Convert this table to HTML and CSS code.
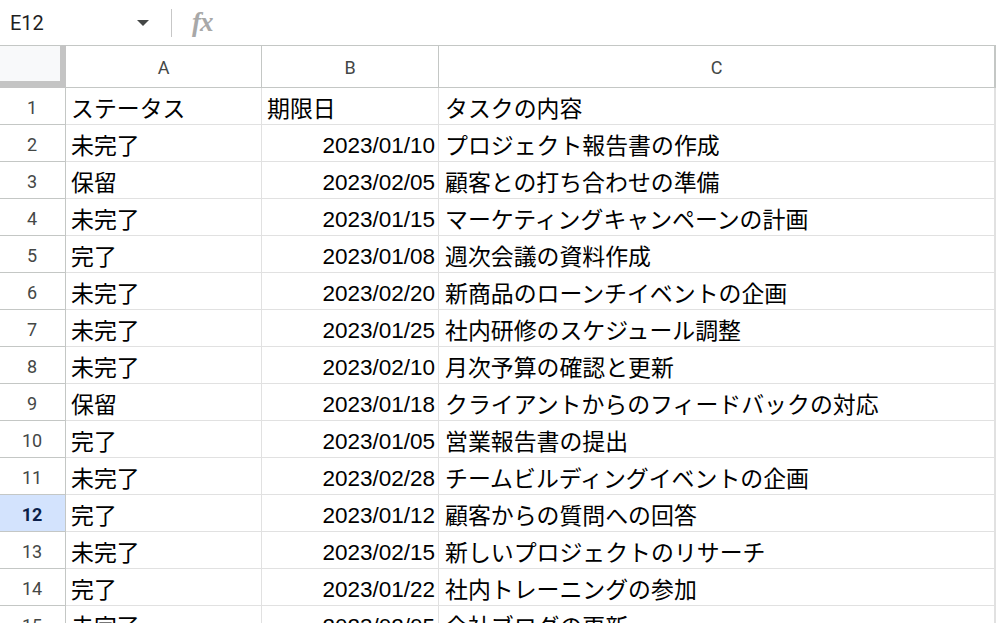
FILE: index.html
```html
<!DOCTYPE html>
<html lang="ja">
<head>
<meta charset="utf-8">
<title>Sheet</title>
<link rel="stylesheet" href="styles.css">
</head>
<body>
<div class="topbar">
  <div class="namebox">E12</div>
  <div class="caret"></div>
  <div class="sep"></div>
  <div class="fx">fx</div>
</div>
<div class="sheet">
  <div class="corner"></div>
  <div class="colhead">A</div>
  <div class="colhead">B</div>
  <div class="colhead last">C</div>

  <div class="rowhead">1</div><div class="cell">ステータス</div><div class="cell">期限日</div><div class="cell last">タスクの内容</div>
  <div class="rowhead">2</div><div class="cell">未完了</div><div class="cell num">2023/01/10</div><div class="cell last">プロジェクト報告書の作成</div>
  <div class="rowhead">3</div><div class="cell">保留</div><div class="cell num">2023/02/05</div><div class="cell last">顧客との打ち合わせの準備</div>
  <div class="rowhead">4</div><div class="cell">未完了</div><div class="cell num">2023/01/15</div><div class="cell last">マーケティングキャンペーンの計画</div>
  <div class="rowhead">5</div><div class="cell">完了</div><div class="cell num">2023/01/08</div><div class="cell last">週次会議の資料作成</div>
  <div class="rowhead">6</div><div class="cell">未完了</div><div class="cell num">2023/02/20</div><div class="cell last">新商品のローンチイベントの企画</div>
  <div class="rowhead">7</div><div class="cell">未完了</div><div class="cell num">2023/01/25</div><div class="cell last">社内研修のスケジュール調整</div>
  <div class="rowhead">8</div><div class="cell">未完了</div><div class="cell num">2023/02/10</div><div class="cell last">月次予算の確認と更新</div>
  <div class="rowhead">9</div><div class="cell">保留</div><div class="cell num">2023/01/18</div><div class="cell last">クライアントからのフィードバックの対応</div>
  <div class="rowhead">10</div><div class="cell">完了</div><div class="cell num">2023/01/05</div><div class="cell last">営業報告書の提出</div>
  <div class="rowhead">11</div><div class="cell">未完了</div><div class="cell num">2023/02/28</div><div class="cell last">チームビルディングイベントの企画</div>
  <div class="rowhead active">12</div><div class="cell">完了</div><div class="cell num">2023/01/12</div><div class="cell last">顧客からの質問への回答</div>
  <div class="rowhead">13</div><div class="cell">未完了</div><div class="cell num">2023/02/15</div><div class="cell last">新しいプロジェクトのリサーチ</div>
  <div class="rowhead">14</div><div class="cell">完了</div><div class="cell num">2023/01/22</div><div class="cell last">社内トレーニングの参加</div>
  <div class="rowhead">15</div><div class="cell">未完了</div><div class="cell num">2023/02/05</div><div class="cell last">会社ブログの更新</div>
</div>
</body>
</html>
```

FILE: styles.css
```css
html, body {
  margin: 0;
  padding: 0;
  background: #ffffff;
  width: 1002px;
  height: 623px;
  overflow: hidden;
  font-family: "Liberation Sans", Arial, "Noto Sans CJK JP", sans-serif;
}

.topbar {
  height: 45px;
  display: flex;
  align-items: center;
  box-sizing: border-box;
}

.namebox {
  width: 128px;
  padding-left: 10px;
  font-family: Roboto, "Liberation Sans", sans-serif;
  font-size: 20px;
  color: #1f1f1f;
  box-sizing: border-box;
}

.caret {
  width: 0;
  height: 0;
  border-left: 6px solid transparent;
  border-right: 6px solid transparent;
  border-top: 6px solid #444746;
  margin-left: 9px;
  margin-top: 1px;
}

.sep {
  width: 1px;
  height: 28px;
  background: #c7c7c7;
  margin-left: 22px;
}

.fx {
  margin-left: 20px;
  font-family: "Liberation Serif", serif;
  font-style: italic;
  font-weight: bold;
  font-size: 27px;
  color: #a8a8a8;
  letter-spacing: -1px;
  margin-top: 0;
}

.sheet {
  display: grid;
  grid-template-columns: 66px 196px 177px 557px;
  grid-template-rows: 43px repeat(15, 37px);
}

.corner {
  box-sizing: border-box;
  background: #f8f9fa;
  border-top: 1px solid #c4c7c5;
  border-right: 6px solid #c4c4c4;
  border-bottom: 7px solid #c4c4c4;
}

.colhead {
  box-sizing: border-box;
  border-top: 1px solid #c4c7c5;
  border-right: 1px solid #c4c7c5;
  border-bottom: 1px solid #c4c7c5;
  display: flex;
  align-items: center;
  justify-content: center;
  font-family: Roboto, "Liberation Sans", sans-serif;
  font-size: 18px;
  color: #444746;
  padding-top: 1px;
}

.colhead.last {
  border-right: 2px solid #c4c7c5;
}

.rowhead {
  box-sizing: border-box;
  border-right: 1px solid #c4c7c5;
  border-bottom: 1px solid #c4c7c5;
  display: flex;
  align-items: center;
  justify-content: center;
  font-family: Roboto, "Liberation Sans", sans-serif;
  font-size: 18px;
  color: #444746;
  padding-right: 1px;
  padding-top: 3px;
}

.rowhead.active {
  background: #d3e3fd;
  color: #0b1f4a;
  font-weight: bold;
}

.cell {
  box-sizing: border-box;
  border-right: 1px solid #e1e1e1;
  border-bottom: 1px solid #e1e1e1;
  display: flex;
  align-items: center;
  padding: 6px 3px 0 5px;
  font-size: 22.9px;
  line-height: 1;
  color: #000000;
  white-space: nowrap;
  overflow: hidden;
}

.cell.num {
  justify-content: flex-end;
  padding-right: 3px;
  font-size: 22.5px;
}

.cell.last {
  border-right: 2px solid #e1e1e1;
  padding-left: 6px;
}
```
